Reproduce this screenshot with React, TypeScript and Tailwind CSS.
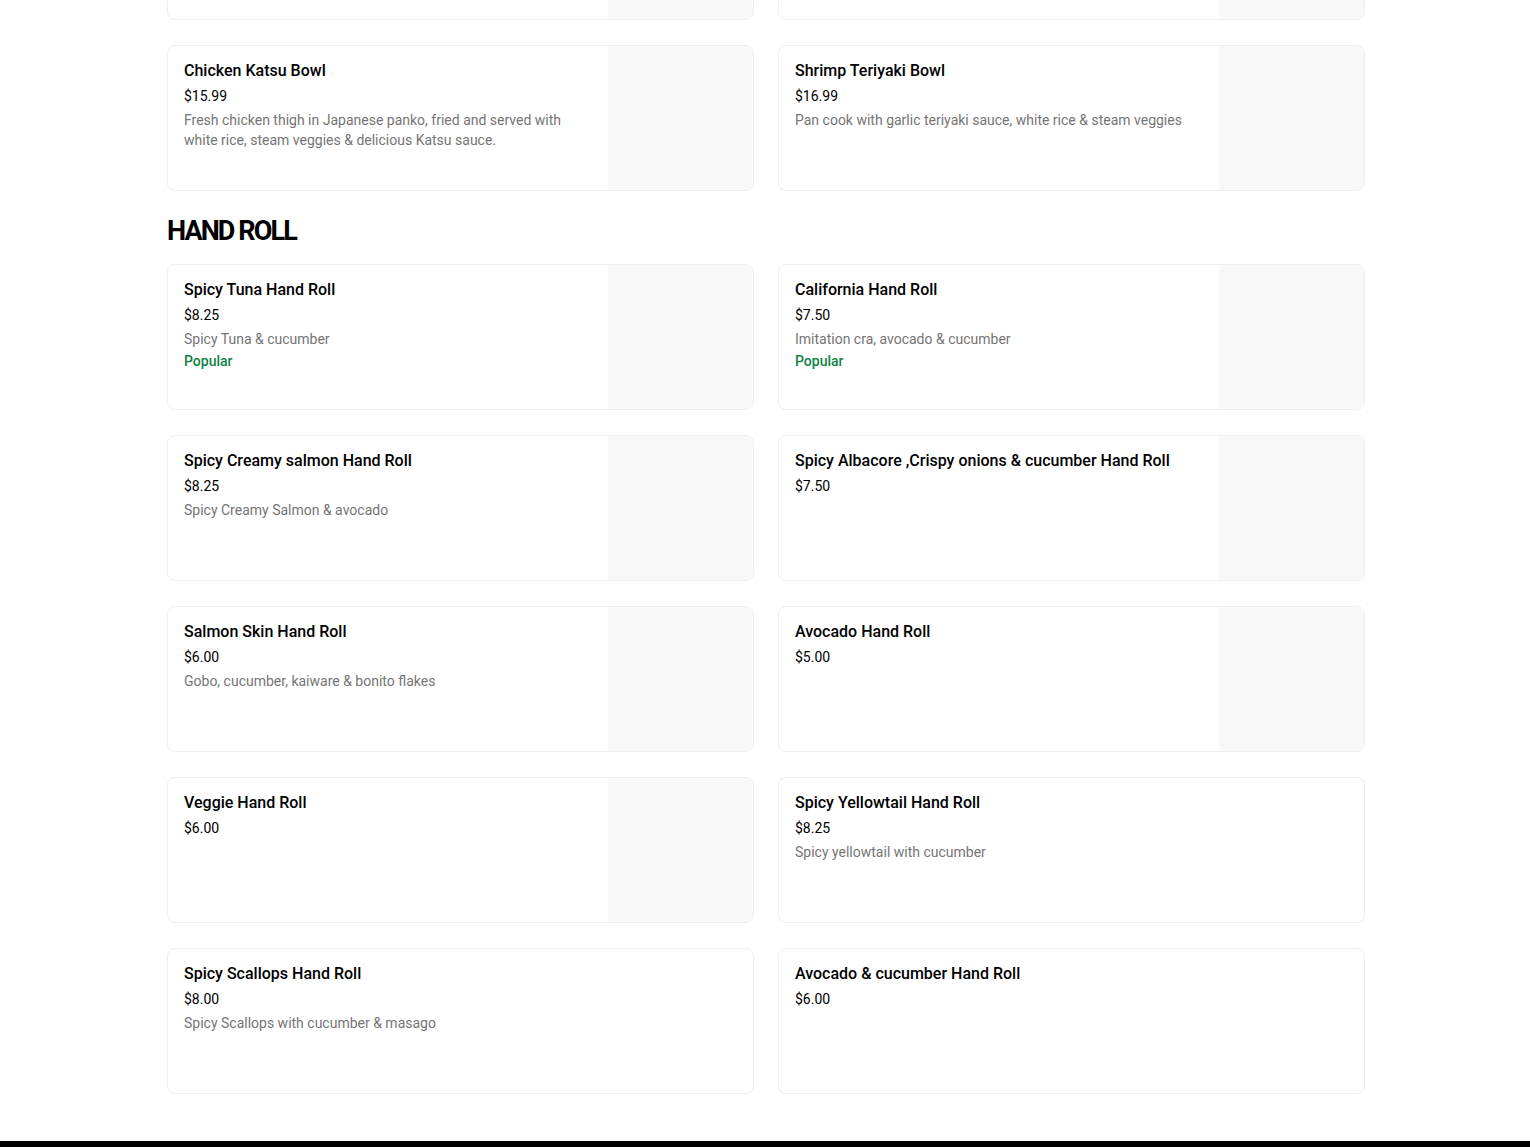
import React from 'react';

type Item = {
    name: string;
    price: string;
    desc?: string;
    popular?: boolean;
    image?: boolean;
};

const bowls: Item[] = [
    { name: 'Salmon Teriyaki Bowl', price: '$16.99', image: true },
    { name: 'Beef Teriyaki Bowl', price: '$16.99', image: true },
    {
        name: 'Chicken Katsu Bowl',
        price: '$15.99',
        desc: 'Fresh chicken thigh in Japanese panko, fried and served with white rice, steam veggies & delicious Katsu sauce.',
        image: true,
    },
    {
        name: 'Shrimp Teriyaki Bowl',
        price: '$16.99',
        desc: 'Pan cook with garlic teriyaki sauce, white rice & steam veggies',
        image: true,
    },
];

const handRolls: Item[] = [
    { name: 'Spicy Tuna Hand Roll', price: '$8.25', desc: 'Spicy Tuna & cucumber', popular: true, image: true },
    { name: 'California Hand Roll', price: '$7.50', desc: 'Imitation cra, avocado & cucumber', popular: true, image: true },
    { name: 'Spicy Creamy salmon Hand Roll', price: '$8.25', desc: 'Spicy Creamy Salmon & avocado', image: true },
    { name: 'Spicy Albacore ,Crispy onions & cucumber Hand Roll', price: '$7.50', image: true },
    { name: 'Salmon Skin Hand Roll', price: '$6.00', desc: 'Gobo, cucumber, kaiware & bonito flakes', image: true },
    { name: 'Avocado Hand Roll', price: '$5.00', image: true },
    { name: 'Veggie Hand Roll', price: '$6.00', image: true },
    { name: 'Spicy Yellowtail Hand Roll', price: '$8.25', desc: 'Spicy yellowtail with cucumber' },
    { name: 'Spicy Scallops Hand Roll', price: '$8.00', desc: 'Spicy Scallops with cucumber & masago' },
    { name: 'Avocado & cucumber Hand Roll', price: '$6.00' },
];

function MenuCard({ item }: { item: Item }) {
    return (
        <div className="flex h-[146px] overflow-hidden rounded-lg border border-[#efefef] bg-white">
            <div className="flex-1 min-w-0 pl-4 pr-3 pt-[13px]">
                <div className="text-[16px] leading-6 font-medium text-black">{item.name}</div>
                <div className="mt-[3px] text-[14px] leading-5 text-black">{item.price}</div>
                {item.desc && (
                    <div className="mt-[4px] text-[14px] leading-5 text-[#757575]">{item.desc}</div>
                )}
                {item.popular && (
                    <div className="mt-[2px] text-[14px] leading-5 font-medium text-[#0e8345]">Popular</div>
                )}
            </div>
            {item.image && <div className="w-[145px] shrink-0 bg-[#f8f8f8]" />}
        </div>
    );
}

export default function App() {
    return (
        <div className="min-h-screen bg-white overflow-hidden font-['Roboto','Liberation_Sans',sans-serif] antialiased">
            <div className="mx-auto w-[1198px] -mt-[126px] translate-x-[1px]">
                <div className="grid grid-cols-2 gap-x-6 gap-y-[25px]">
                    {bowls.map((item) => (
                        <MenuCard key={item.name} item={item} />
                    ))}
                </div>

                <h2 className="mt-[24px] mb-[17px] text-[27px] leading-8 font-bold tracking-[-0.07em] text-black">
                    HAND ROLL
                </h2>

                <div className="grid grid-cols-2 gap-x-6 gap-y-[25px]">
                    {handRolls.map((item) => (
                        <MenuCard key={item.name} item={item} />
                    ))}
                </div>
            </div>

            <footer className="mt-[47px] h-[120px] bg-black" />
        </div>
    );
}
